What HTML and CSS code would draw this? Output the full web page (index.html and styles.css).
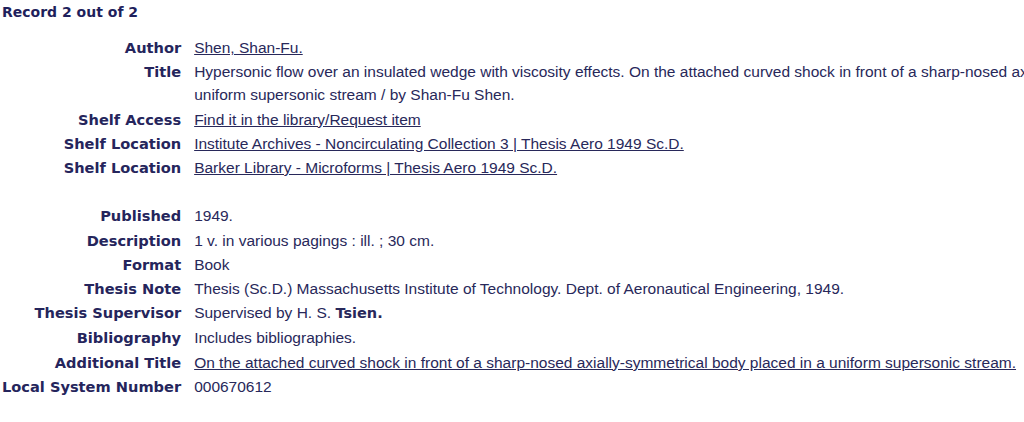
FILE: index.html
```html
<!DOCTYPE html>
<html lang="en">
<head>
    <meta charset="UTF-8">
    <title>Record 2 out of 2</title>
    <link rel="stylesheet" href="styles.css">
</head>
<body>

    <div class="record">
        <div class="record-count">Record 2 out of 2</div>

        <table class="full-record">
            <tr>
                <th>Author</th>
                <td><a href="#">Shen, Shan-Fu.</a></td>
            </tr>
            <tr>
                <th>Title</th>
                <td>Hypersonic flow over an insulated wedge with viscosity effects. On the attached curved shock in front of a sharp-nosed axially-symmetrical body placed in a uniform supersonic stream / by Shan-Fu Shen.</td>
            </tr>
            <tr>
                <th>Shelf Access</th>
                <td><a href="#">Find it in the library/Request item</a></td>
            </tr>
            <tr>
                <th>Shelf Location</th>
                <td><a href="#">Institute Archives - Noncirculating Collection 3 | Thesis Aero 1949 Sc.D.</a></td>
            </tr>
            <tr>
                <th>Shelf Location</th>
                <td><a href="#">Barker Library - Microforms | Thesis Aero 1949 Sc.D.</a></td>
            </tr>
            <tr class="spacer">
                <th>&nbsp;</th>
                <td>&nbsp;</td>
            </tr>
            <tr>
                <th>Published</th>
                <td>1949.</td>
            </tr>
            <tr>
                <th>Description</th>
                <td>1 v. in various pagings : ill. ; 30 cm.</td>
            </tr>
            <tr>
                <th>Format</th>
                <td>Book</td>
            </tr>
            <tr>
                <th>Thesis Note</th>
                <td>Thesis (Sc.D.) Massachusetts Institute of Technology. Dept. of Aeronautical Engineering, 1949.</td>
            </tr>
            <tr>
                <th>Thesis Supervisor</th>
                <td>Supervised by H. S. <strong>Tsien.</strong></td>
            </tr>
            <tr>
                <th>Bibliography</th>
                <td>Includes bibliographies.</td>
            </tr>
            <tr>
                <th>Additional Title</th>
                <td><a href="#">On the attached curved shock in front of a sharp-nosed axially-symmetrical body placed in a uniform supersonic stream.</a></td>
            </tr>
            <tr>
                <th>Local System Number</th>
                <td>000670612</td>
            </tr>
        </table>
    </div>

</body>
</html>
```

FILE: styles.css
```css
html {
    overflow: hidden;
}
body {
    margin: 0;
    background: #ffffff;
    color: #28285a;
    font-family: "Liberation Sans", Arial, sans-serif;
}
.record {
    width: 1320px;
}
.record-count {
    font-family: "DejaVu Sans", Verdana, sans-serif;
    font-weight: bold;
    font-size: 14px;
    color: #1f1f5c;
    padding: 4px 0 0 2px;
    height: 24px;
}
.full-record {
    border-collapse: collapse;
    margin-top: 7px;
}
.full-record th {
    font-family: "DejaVu Sans", Verdana, sans-serif;
    font-weight: bold;
    font-size: 14.6px;
    color: #25255c;
    text-align: right;
    vertical-align: top;
    white-space: nowrap;
    padding: 1px 13px 0 2px;
    line-height: 23.2px;
}
.full-record td {
    font-size: 15.5px;
    vertical-align: top;
    padding: 1px 0 0 0;
    line-height: 23.2px;
    width: 1092px;
}
.full-record a {
    color: #28285a;
    text-decoration: underline;
}
.full-record strong {
    font-family: "DejaVu Sans", Verdana, sans-serif;
    font-size: 14.5px;
}
```
